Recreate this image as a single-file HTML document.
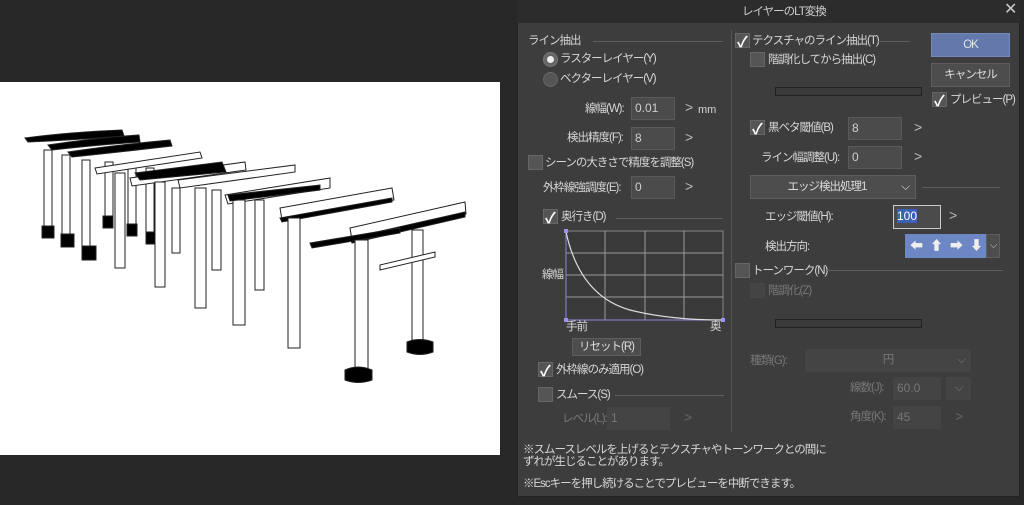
<!DOCTYPE html><html><head><meta charset="utf-8"><style>
*{margin:0;padding:0;box-sizing:border-box}
body{width:1024px;height:505px;background:#282828;position:relative;overflow:hidden;font-family:"Liberation Sans","Noto Sans CJK JP",sans-serif;font-size:11.5px;letter-spacing:-1px;color:#d6d6d6}
.a{position:absolute;white-space:nowrap;line-height:14px}
.in{position:absolute;background:#4b4b4b;border:1px solid #5a5a5a;color:#cfcfcf;padding:2px 3px;font-size:12px;line-height:16px;letter-spacing:0}
.cb{position:absolute;width:15px;height:15px;background:#555;border:1px solid #666}
.ck::after{content:"✓";position:absolute;left:1px;top:-3px;font-size:15px;color:#fff;font-weight:bold}
.ln{position:absolute;height:1px;background:#5e5e5e}
.gt{position:absolute;color:#bbb;font-size:14px}
.dis{color:#777}
.btn{position:absolute;background:#4d4d4d;border:1px solid #5e5e5e;text-align:center;color:#ddd}
</style></head><body>
<div style="position:absolute;left:0;top:82px;width:500px;height:373px;background:#fff"></div>
<svg style="position:absolute;left:0;top:100px" width="500" height="300" viewBox="0 0 500 300" fill="#fff" stroke="#222" stroke-width="1">
<g>
<path d="M25 38 Q70 32 122 30 L124 36 Q75 40 28 42Z" fill="#000"/>
<path d="M48 45 Q95 38 139 35 L140 42 Q95 45 52 50Z" fill="#000"/>
<path d="M68 52 Q115 45 170 40 L172 46 Q120 52 72 57Z" fill="#000"/>
<rect x="44" y="50" width="8" height="80"/><rect x="62" y="55" width="8" height="85"/><rect x="82" y="60" width="8" height="92"/>
<rect x="42" y="126" width="12" height="12" fill="#000"/><rect x="61" y="134" width="13" height="13" fill="#000"/><rect x="82" y="146" width="14" height="14" fill="#000"/>
<rect x="105" y="62" width="8" height="55"/><rect x="128" y="65" width="8" height="60"/><rect x="146" y="68" width="8" height="65"/>
<rect x="103" y="116" width="10" height="12" fill="#000"/><rect x="127" y="124" width="10" height="12" fill="#000"/><rect x="146" y="132" width="9" height="12" fill="#000"/>
<path d="M95 68 L200 52 L202 58 L97 74Z"/><rect x="115" y="73" width="10" height="95"/>
<path d="M130 78 L245 62 L246 70 L132 86Z"/><rect x="155" y="82" width="10" height="105"/><rect x="172" y="88" width="8" height="65"/>
<path d="M135 73 L222 62 L226 72 L140 80Z" fill="#000"/>
<path d="M178 80 L295 65 L295 72 L180 88Z"/><rect x="195" y="88" width="11" height="120"/><rect x="212" y="90" width="9" height="80"/>
<path d="M225 95 L330 78 L330 88 L228 104Z"/><rect x="233" y="100" width="12" height="125"/><rect x="255" y="100" width="9" height="90"/>
<path d="M228 95 L320 85 L320 90 L230 101Z" fill="#000"/>
<path d="M280 108 L392 88 L394 100 L282 120Z"/><path d="M280 118 L392 98 L392 102 L282 122Z" fill="#000"/><rect x="288" y="118" width="12" height="130"/>
<path d="M350 128 L465 102 L466 114 L352 140Z"/><path d="M350 138 L465 112 L465 117 L352 143Z" fill="#000"/>
<path d="M310 143 L400 128 L400 133 L312 148Z" fill="#000"/>
<rect x="355" y="140" width="13" height="130"/><rect x="412" y="130" width="11" height="110"/>
<path d="M345 270 Q358 264 372 270 L372 280 Q358 285 345 280Z" fill="#000"/>
<path d="M407 242 Q420 237 433 242 L433 252 Q420 257 407 252Z" fill="#000"/>
<path d="M380 165 L435 152 L435 157 L380 170Z"/>
</g></svg>
<div style="position:absolute;left:517px;top:0;width:503px;height:497px;background:#3d3d3d;border:1px solid #222"></div>
<div style="position:absolute;left:517px;top:0;width:503px;height:23px;background:#2c2c2c"></div>
<div class="a" style="left:742px;top:5px;color:#ccc">レイヤーのLT変換</div>
<div class="a" style="left:1004px;top:3px;font-size:16px;color:#ccc">✕</div>

<div class="a" style="left:528px;top:34px">ライン抽出</div><div class="ln" style="left:593px;top:41px;width:130px"></div>
<div style="position:absolute;left:543px;top:52px;width:15px;height:15px;border-radius:50%;background:#666;border:1px solid #777"><div style="position:absolute;left:3px;top:3px;width:7px;height:7px;border-radius:50%;background:#eee"></div></div>
<div class="a" style="left:560px;top:52px">ラスターレイヤー(Y)</div>
<div style="position:absolute;left:543px;top:72px;width:15px;height:15px;border-radius:50%;background:#555;border:1px solid #666"></div>
<div class="a" style="left:560px;top:72px">ベクターレイヤー(V)</div>
<div class="a" style="left:585px;top:102px">線幅(W):</div><div class="in" style="left:631px;top:97px;width:44px;height:23px">0.01</div><div class="gt" style="left:685px;top:99px">&gt;</div><div class="a" style="left:698px;top:103px;font-size:11px;letter-spacing:0">mm</div>
<div class="a" style="left:567px;top:131px">検出精度(F):</div><div class="in" style="left:631px;top:127px;width:44px;height:23px">8</div><div class="gt" style="left:685px;top:129px">&gt;</div>
<div class="cb" style="left:528px;top:155px"></div><div class="a" style="left:545px;top:156px">シーンの大きさで精度を調整(S)</div>
<div class="a" style="left:543px;top:181px">外枠線強調度(E):</div><div class="in" style="left:631px;top:176px;width:44px;height:23px">0</div><div class="gt" style="left:685px;top:178px">&gt;</div>
<div class="cb ck" style="left:543px;top:209px"></div><div class="a" style="left:561px;top:210px">奥行き(D)</div><div class="ln" style="left:616px;top:218px;width:107px"></div>
<svg style="position:absolute;left:560px;top:226px" width="170" height="100">
<rect x="6" y="5" width="157" height="89" fill="#3a3a3a" stroke="#888"/>
<g stroke="#999"><line x1="45" y1="5" x2="45" y2="94"/><line x1="85" y1="5" x2="85" y2="94"/><line x1="124" y1="5" x2="124" y2="94"/><line x1="6" y1="27" x2="163" y2="27"/><line x1="6" y1="49" x2="163" y2="49"/><line x1="6" y1="71" x2="163" y2="71"/></g>
<line x1="6" y1="5" x2="6" y2="94" stroke="#8a86e0"/><line x1="6" y1="94" x2="163" y2="94" stroke="#8a86e0"/>
<path d="M6 6 Q20 70 70 84 Q110 94 163 94" fill="none" stroke="#ddd" stroke-width="1.2"/>
<rect x="4" y="3" width="4" height="4" fill="#9a94f0"/><rect x="4" y="92" width="4" height="4" fill="#9a94f0"/><rect x="161" y="92" width="4" height="4" fill="#9a94f0"/>
</svg>
<div class="a" style="left:542px;top:268px">線幅</div>
<div class="a" style="left:566px;top:320px">手前</div><div class="a" style="left:710px;top:320px">奥</div>
<div class="btn" style="left:572px;top:338px;width:69px;height:18px;line-height:16px">リセット(R)</div>
<div class="cb ck" style="left:538px;top:362px"></div><div class="a" style="left:556px;top:363px">外枠線のみ適用(O)</div>
<div class="cb" style="left:538px;top:387px"></div><div class="a" style="left:556px;top:388px">スムース(S)</div><div class="ln" style="left:615px;top:395px;width:109px"></div>
<div class="a dis" style="left:562px;top:412px">レベル(L):</div><div class="in dis" style="left:607px;top:407px;width:63px;height:23px;background:#444;border-color:#444;color:#777">1</div><div class="gt dis" style="left:684px;top:409px;color:#666">&gt;</div>
<div style="position:absolute;left:731px;top:30px;width:1px;height:402px;background:#555"></div>
<div class="a" style="left:523px;top:444px;line-height:12px">※スムースレベルを上げるとテクスチャやトーンワークとの間に<br>ずれが生じることがあります。</div>
<div class="a" style="left:523px;top:477px">※Escキーを押し続けることでプレビューを中断できます。</div>

<div class="cb ck" style="left:735px;top:33px"></div><div class="a" style="left:752px;top:34px">テクスチャのライン抽出(T)</div><div class="ln" style="left:877px;top:41px;width:33px"></div>
<div class="btn" style="left:931px;top:33px;width:79px;height:24px;line-height:22px;background:#6478ac;border-color:#7688b8;color:#dfe4f0">OK</div>
<div class="btn" style="left:931px;top:63px;width:79px;height:24px;line-height:22px">キャンセル</div>
<div class="cb ck" style="left:932px;top:92px"></div><div class="a" style="left:950px;top:93px">プレビュー(P)</div>
<div class="cb" style="left:750px;top:52px"></div><div class="a" style="left:768px;top:53px">階調化してから抽出(C)</div>
<div style="position:absolute;left:775px;top:87px;width:147px;height:9px;border:1px solid #222;background:#3a3a3a"></div>
<div class="cb ck" style="left:750px;top:120px"></div><div class="a" style="left:768px;top:121px">黒ベタ閾値(B)</div><div class="in" style="left:848px;top:117px;width:54px;height:23px">8</div><div class="gt" style="left:914px;top:119px">&gt;</div>
<div class="a" style="left:761px;top:151px">ライン幅調整(U):</div><div class="in" style="left:848px;top:146px;width:54px;height:23px">0</div><div class="gt" style="left:914px;top:148px">&gt;</div>
<div class="btn" style="left:750px;top:175px;width:166px;height:24px;line-height:22px"><span style="margin-right:12px">エッジ検出処理1</span><span style="position:absolute;right:6px;top:0">⌵</span></div><div class="ln" style="left:922px;top:187px;width:78px"></div>
<div class="a" style="left:765px;top:210px">エッジ閾値(H):</div><div class="in" style="left:893px;top:205px;width:48px;height:24px;border-color:#ccc"><span style="background:#3b62b5;color:#fff">100</span></div><div class="gt" style="left:949px;top:207px">&gt;</div>
<div class="a" style="left:765px;top:240px">検出方向:</div>
<div style="position:absolute;left:905px;top:234px;width:81px;height:24px;background:#6d87c4;color:#eee;font-size:13px;line-height:24px;letter-spacing:7px;padding-left:5px">⬅⬆➡⬇</div>
<div style="position:absolute;left:986px;top:234px;width:14px;height:24px;background:#4d4d4d;border:1px solid #5e5e5e;color:#ccc;font-size:10px;line-height:22px;text-align:center">⌵</div>
<div class="cb" style="left:735px;top:263px"></div><div class="a" style="left:752px;top:264px">トーンワーク(N)</div><div class="ln" style="left:827px;top:270px;width:176px"></div>
<div class="cb" style="left:750px;top:283px;background:#444;border-color:#464646"></div><div class="a dis" style="left:768px;top:284px">階調化(Z)</div>
<div style="position:absolute;left:775px;top:319px;width:147px;height:9px;border:1px solid #222;background:#3a3a3a"></div>
<div class="a dis" style="left:750px;top:354px">種類(G):</div><div style="position:absolute;left:805px;top:349px;width:166px;height:23px;background:#444;color:#777;text-align:center;line-height:23px">円<span style="position:absolute;right:6px">⌵</span></div>
<div class="a dis" style="left:850px;top:381px">線数(J):</div><div class="in" style="left:893px;top:377px;width:48px;height:23px;background:#444;border-color:#444;color:#777">60.0</div><div style="position:absolute;left:946px;top:377px;width:25px;height:23px;background:#444;color:#777;text-align:center;line-height:23px">⌵</div>
<div class="a dis" style="left:850px;top:410px">角度(K):</div><div class="in" style="left:893px;top:406px;width:48px;height:23px;background:#444;border-color:#444;color:#777">45</div><div class="gt dis" style="left:955px;top:408px;color:#666">&gt;</div>
</body></html>
